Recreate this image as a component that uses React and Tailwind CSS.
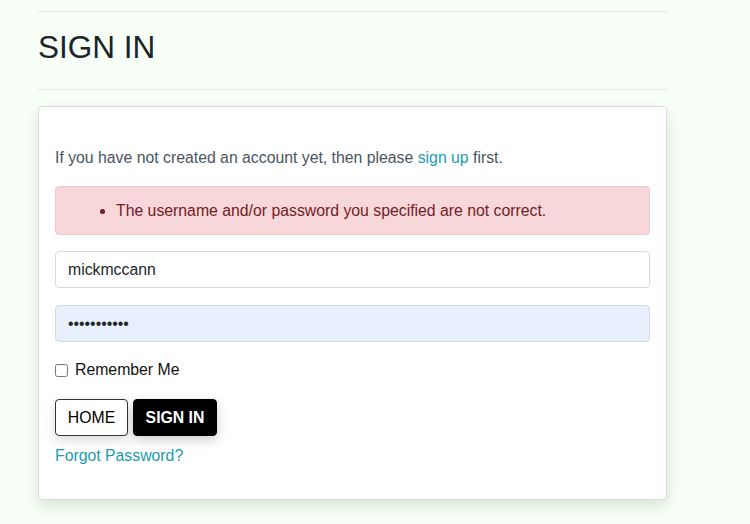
import React from "react";

export default function App() {
  return (
    <div
      className="min-h-screen w-full bg-[#f7fff7] text-[#212529]"
      style={{ fontFamily: '"Liberation Sans", Arial, sans-serif' }}
    >
      <div className="w-[629px] ml-[38px] pt-[11px]">
        {/* Header */}
        <hr className="border-0 border-t border-[#e2e6e2]" />
        <h1 className="text-[31.5px] leading-[38px] font-light text-[#1d2329] mt-[16px] mb-[23px]">
          SIGN IN
        </h1>
        <hr className="border-0 border-t border-[#e2e6e2]" />

        {/* Card */}
        <div className="mt-[16px] bg-white border border-[#dcdcdc] rounded-[4px] shadow-[0_6px_16px_rgba(0,0,0,0.12)] px-[16px] pt-[39px] pb-[31px]">
          <p className="text-[15.8px] leading-[24px] text-[#4a5560]">
            If you have not created an account yet, then please{" "}
            <a href="#" className="text-[#1a9bb3]">sign up</a> first.
          </p>

          {/* Error */}
          <div className="mt-[16px] bg-[#f8d7da] border border-[#f5c6cb] rounded-[4px] py-[12px] text-[#721c24] text-[15.8px] leading-[23px]">
            <ul className="list-disc pl-[60px]">
              <li>The username and/or password you specified are not correct.</li>
            </ul>
          </div>

          {/* Inputs */}
          <input
            type="text"
            defaultValue="mickmccann"
            className="mt-[16px] block w-full h-[37px] px-[12px] text-[15.8px] text-[#212529] bg-white border border-[#d4dae0] rounded-[4px] outline-none"
          />
          <input
            type="password"
            defaultValue="mickmccann1"
            className="mt-[17px] block w-full h-[37px] px-[12px] text-[15.8px] text-[#212529] bg-[#e8f0fe] border border-[#d4dae0] rounded-[4px] outline-none"
          />

          {/* Remember */}
          <label className="mt-[16px] flex items-center gap-[7px] text-[15.8px] leading-[24px] text-[#111]">
            <input type="checkbox" className="w-[13px] h-[13px] m-0 accent-gray-500" />
            Remember Me
          </label>

          {/* Buttons */}
          <div className="mt-[17px] flex gap-[5px]">
            <button className="h-[37px] w-[73px] bg-white border border-[#333] rounded-[4px] text-[15.8px] text-black shadow-[0_4px_12px_rgba(0,0,0,0.15)]">
              HOME
            </button>
            <button className="h-[37px] w-[84px] bg-black border border-black rounded-[4px] text-[15.8px] font-bold text-white shadow-[0_4px_12px_rgba(0,0,0,0.2)]">
              SIGN IN
            </button>
          </div>

          <a href="#" className="block mt-[8px] text-[15.8px] leading-[24px] text-[#1a9bb3]">
            Forgot Password?
          </a>
        </div>
      </div>
    </div>
  );
}
